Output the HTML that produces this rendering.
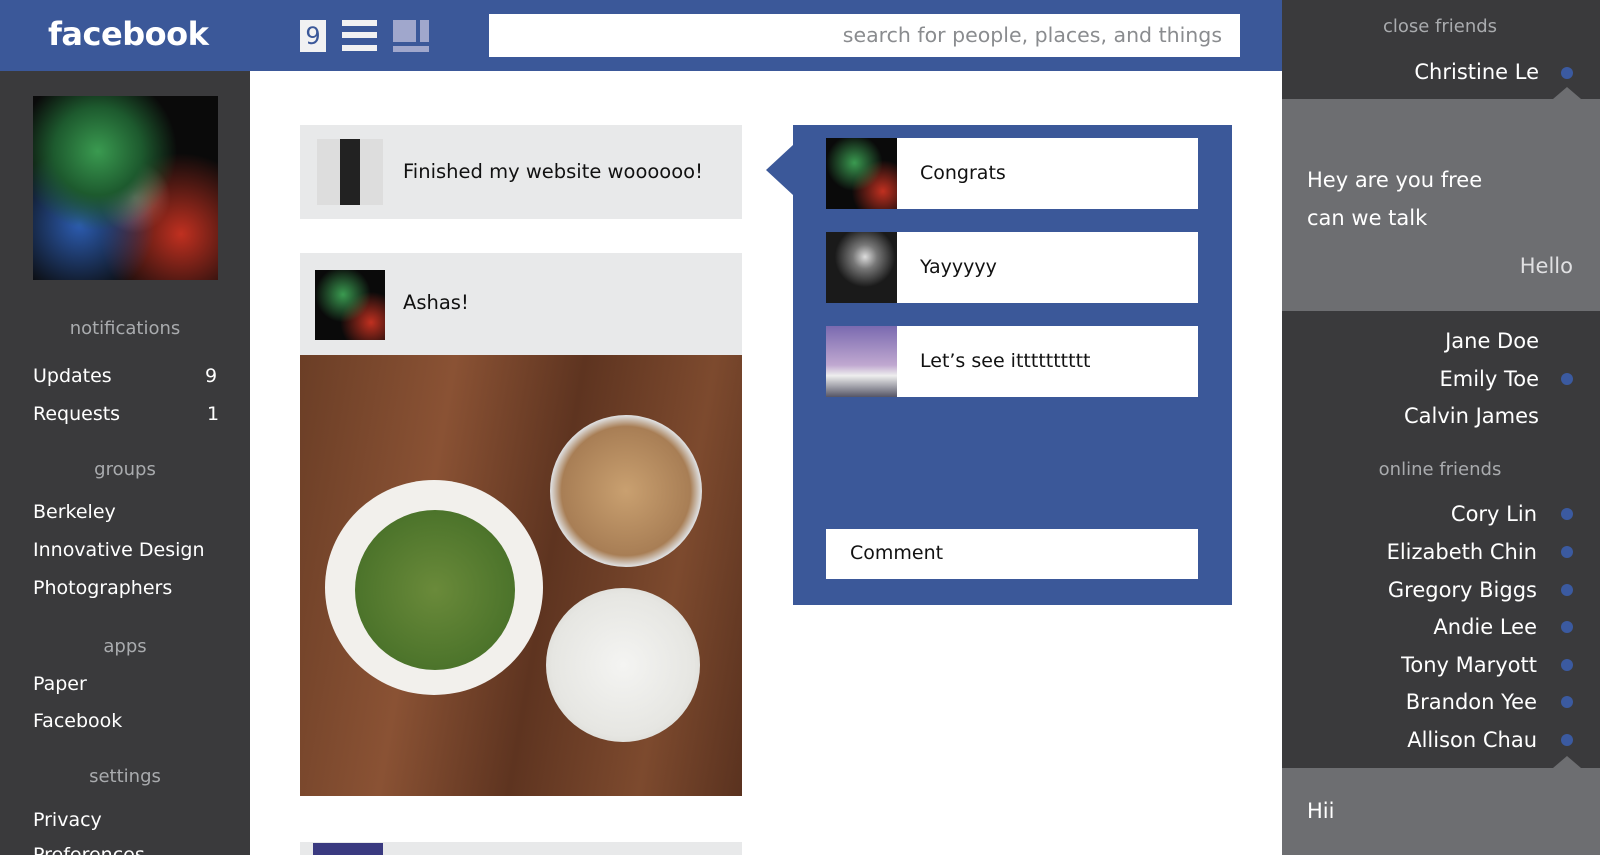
<!DOCTYPE html><html><head><style>
*{margin:0;padding:0;box-sizing:border-box}
body{width:1600px;height:855px;overflow:hidden;position:relative;background:#fff;font-family:"DejaVu Sans","Liberation Sans",sans-serif;}
.a{position:absolute}
.t{position:absolute;white-space:nowrap;line-height:1}
.side{color:#fff;font-size:19px}
.hd{color:#a9abae;font-size:18px}
.r{color:#fff;font-size:21px;right:61px;text-align:right}
.dot{position:absolute;width:12px;height:12px;border-radius:50%;background:#3b5aa0;left:1561px}
.cm{position:absolute;left:826px;width:372px;height:71px;background:#fff}
.cm .av{position:absolute;left:0;top:0;width:71px;height:71px}
.cm span{position:absolute;left:94px;top:24px;font-size:19px;color:#111}
</style></head><body>
<div class="a" style="left:0;top:0;width:1282px;height:71px;background:#3b5899"></div>
<div class="t" style="left:48px;top:18px;font-size:32px;font-weight:bold;color:#fff;letter-spacing:-0.5px">facebook</div>
<div class="a" style="left:300px;top:20px;width:26px;height:32px;background:#f1f1f2;color:#3b5899;font-size:24px;text-align:center;line-height:32px">9</div>
<div class="a" style="left:342px;top:20px;width:35px;height:6px;background:#f1f1f2"></div>
<div class="a" style="left:342px;top:32px;width:35px;height:6px;background:#f1f1f2"></div>
<div class="a" style="left:342px;top:45px;width:35px;height:6px;background:#f1f1f2"></div>
<div class="a" style="left:393px;top:20px;width:23px;height:22px;background:#a0a7cc"></div>
<div class="a" style="left:420px;top:20px;width:9px;height:22px;background:#a0a7cc"></div>
<div class="a" style="left:393px;top:46px;width:36px;height:6px;background:#a0a7cc"></div>
<div class="a" style="left:489px;top:14px;width:751px;height:43px;background:#fff"></div>
<div class="t" style="right:378px;top:25px;font-size:20.5px;color:#8a8c8f">search for people, places, and things</div>

<div class="a" style="left:0;top:71px;width:250px;height:784px;background:#3a3a3c"></div>
<div class="a" style="left:33px;top:96px;width:185px;height:184px;background:radial-gradient(circle at 35% 30%,#3a9a50 0,#1d5a2e 25%,transparent 45%),radial-gradient(circle at 25% 70%,#2c5cb0 0,transparent 40%),radial-gradient(circle at 80% 75%,#c03020 0,transparent 40%),radial-gradient(circle at 55% 55%,#b8b0a8 0,transparent 25%),#0a0a0a"></div>
<div class="t hd" style="left:0;width:250px;text-align:center;top:320px">notifications</div>
<div class="t side" style="left:33px;top:367px">Updates</div><div class="t side" style="left:205px;top:367px">9</div>
<div class="t side" style="left:33px;top:405px">Requests</div><div class="t side" style="left:207px;top:405px">1</div>
<div class="t hd" style="left:0;width:250px;text-align:center;top:461px">groups</div>
<div class="t side" style="left:33px;top:503px">Berkeley</div>
<div class="t side" style="left:33px;top:541px">Innovative Design</div>
<div class="t side" style="left:33px;top:579px">Photographers</div>
<div class="t hd" style="left:0;width:250px;text-align:center;top:638px">apps</div>
<div class="t side" style="left:33px;top:675px">Paper</div>
<div class="t side" style="left:33px;top:712px">Facebook</div>
<div class="t hd" style="left:0;width:250px;text-align:center;top:768px">settings</div>
<div class="t side" style="left:33px;top:811px">Privacy</div>
<div class="t side" style="left:33px;top:846px">Preferences</div>

<div class="a" style="left:300px;top:125px;width:442px;height:94px;background:#e8e9ea"></div>
<div class="a" style="left:317px;top:139px;width:66px;height:66px;background:linear-gradient(90deg,#ddd 0,#ddd 35%,#222 35%,#222 65%,#ddd 65%)"></div>
<div class="t" style="left:403px;top:162px;font-size:19.5px;color:#111">Finished my website woooooo!</div>
<div class="a" style="left:300px;top:253px;width:442px;height:102px;background:#e8e9ea"></div>
<div class="a" style="left:315px;top:270px;width:70px;height:70px;background:radial-gradient(circle at 40% 35%,#3a9a50,transparent 45%),radial-gradient(circle at 80% 75%,#c03020,transparent 40%),#0a0a0a"></div>
<div class="t" style="left:403px;top:293px;font-size:19.5px;color:#111">Ashas!</div>
<div class="a" style="left:300px;top:355px;width:442px;height:441px;background:linear-gradient(100deg,#6b3e26,#8a5234 30%,#5e3420 55%,#7d4a2e 80%,#5a321f)"></div>
<div class="a" style="left:325px;top:480px;width:218px;height:215px;border-radius:50%;background:#f2f0ec"></div>
<div class="a" style="left:355px;top:510px;width:160px;height:160px;border-radius:50%;background:radial-gradient(circle,#6a8a3a,#3f6a24)"></div>
<div class="a" style="left:550px;top:415px;width:152px;height:152px;border-radius:50%;background:radial-gradient(circle,#c9a070,#a87e55 60%,#ddd 70%,#c0b8ae)"></div>
<div class="a" style="left:546px;top:588px;width:154px;height:154px;border-radius:50%;background:radial-gradient(circle,#f4f4f2,#e6e6e2 65%,#c8c6c0)"></div>
<div class="a" style="left:300px;top:842px;width:442px;height:13px;background:#e8e9ea"></div>
<div class="a" style="left:313px;top:843px;width:70px;height:12px;background:#3a3a80"></div>

<div class="a" style="left:793px;top:125px;width:439px;height:480px;background:#3b5899"></div>
<div class="a" style="left:766px;top:145px;width:0;height:0;border-top:25px solid transparent;border-bottom:25px solid transparent;border-right:27px solid #3b5899"></div>
<div class="cm" style="top:138px"><div class="av" style="background:radial-gradient(circle at 40% 35%,#3a9a50,transparent 45%),radial-gradient(circle at 80% 75%,#c03020,transparent 40%),#0a0a0a"></div><span>Congrats</span></div>
<div class="cm" style="top:232px"><div class="av" style="background:radial-gradient(circle at 55% 35%,#ddd 0,#777 20%,#1a1a1a 50%),#111"></div><span>Yayyyyy</span></div>
<div class="cm" style="top:326px"><div class="av" style="background:linear-gradient(180deg,#7a6ab0,#c0a8d0 55%,#eee 70%,#556)"></div><span>Let’s see itttttttttt</span></div>
<div class="a" style="left:826px;top:529px;width:372px;height:50px;background:#fff"></div>
<div class="t" style="left:850px;top:544px;font-size:19px;color:#111">Comment</div>

<div class="a" style="left:1282px;top:0;width:318px;height:855px;background:#3a3a3c"></div>
<div class="t hd" style="left:1282px;width:316px;text-align:center;top:18px">close friends</div>
<div class="t r" style="top:62px">Christine Le</div><div class="dot" style="top:67px"></div>
<div class="a" style="left:1282px;top:99px;width:318px;height:212px;background:#6d6e71"></div>
<div class="a" style="left:1553px;top:87px;border-left:14px solid transparent;border-right:14px solid transparent;border-bottom:12px solid #6d6e71"></div>
<div class="t" style="left:1307px;top:170px;font-size:21px;color:#fff">Hey are you free</div>
<div class="t" style="left:1307px;top:208px;font-size:21px;color:#fff">can we talk</div>
<div class="t" style="right:27px;top:256px;font-size:21px;color:#e0e0e2">Hello</div>
<div class="t r" style="top:331px">Jane Doe</div>
<div class="t r" style="top:369px">Emily Toe</div><div class="dot" style="top:373px"></div>
<div class="t r" style="top:406px">Calvin James</div>
<div class="t hd" style="left:1282px;width:316px;text-align:center;top:461px">online friends</div>
<div class="t r" style="top:504px;right:63px">Cory Lin</div><div class="dot" style="top:508px"></div>
<div class="t r" style="top:542px;right:63px">Elizabeth Chin</div><div class="dot" style="top:546px"></div>
<div class="t r" style="top:580px;right:63px">Gregory Biggs</div><div class="dot" style="top:584px"></div>
<div class="t r" style="top:617px;right:63px">Andie Lee</div><div class="dot" style="top:621px"></div>
<div class="t r" style="top:655px;right:63px">Tony Maryott</div><div class="dot" style="top:659px"></div>
<div class="t r" style="top:692px;right:63px">Brandon Yee</div><div class="dot" style="top:696px"></div>
<div class="t r" style="top:730px;right:63px">Allison Chau</div><div class="dot" style="top:734px"></div>
<div class="a" style="left:1282px;top:768px;width:318px;height:87px;background:#6d6e71"></div>
<div class="a" style="left:1553px;top:756px;border-left:14px solid transparent;border-right:14px solid transparent;border-bottom:12px solid #6d6e71"></div>
<div class="t" style="left:1307px;top:801px;font-size:21px;color:#fff">Hii</div>
</body></html>
